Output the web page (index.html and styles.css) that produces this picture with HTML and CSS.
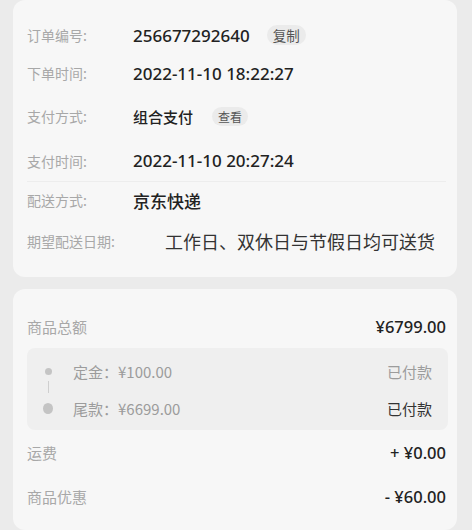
FILE: index.html
```html
<!DOCTYPE html>
<html lang="zh-CN">
<head>
<meta charset="utf-8">
<link rel="stylesheet" href="styles.css">
</head>
<body>
<div class="page">
  <section class="card info">
    <div class="row r1"><span class="label">订单编号:</span><span class="val num">256677292640</span><span class="tag tag-copy">复制</span></div>
    <div class="row r2"><span class="label">下单时间:</span><span class="val num">2022-11-10 18:22:27</span></div>
    <div class="row r3"><span class="label">支付方式:</span><span class="val cn">组合支付</span><span class="tag tag-view">查看</span></div>
    <div class="row r4 sep"><span class="label">支付时间:</span><span class="val num">2022-11-10 20:27:24</span></div>
    <div class="row r5"><span class="label">配送方式:</span><span class="val cn big">京东快递</span></div>
    <div class="row r6"><span class="label">期望配送日期:</span><span class="val plain">工作日、双休日与节假日均可送货</span></div>
  </section>
  <section class="card price">
    <div class="prow p1"><span class="plabel">商品总额</span><span class="amount">¥6799.00</span></div>
    <div class="stages">
      <div class="stage s1">
        <span class="dotcol"><span class="dot small"></span><span class="vline"></span></span>
        <span class="stext">定金：¥100.00</span>
        <span class="sstate">已付款</span>
      </div>
      <div class="stage s2">
        <span class="dotcol"><span class="dot large"></span></span>
        <span class="stext">尾款：¥6699.00</span>
        <span class="sstate dark">已付款</span>
      </div>
    </div>
    <div class="prow p2"><span class="plabel">运费</span><span class="amount">+ ¥0.00</span></div>
    <div class="prow p3"><span class="plabel">商品优惠</span><span class="amount">- ¥60.00</span></div>
  </section>
</div>
</body>
</html>
```
FILE: styles.css
```css
* { box-sizing: border-box; }
html, body {
  margin: 0;
  padding: 0;
  background: #ebebeb;
}
body {
  font-family: "Noto Sans", "Noto Sans CJK SC", sans-serif;
  color: #222;
  width: 472px;
  height: 530px;
  overflow: hidden;
}
.page {
  padding: 0 15px 0 13px;
  display: flex;
  flex-direction: column;
  gap: 12px;
}
.card {
  background: #f7f7f7;
  border-radius: 12px;
}
.info {
  padding: 16px 11px 13px 14px;
}
.row {
  display: flex;
  align-items: center;
}
.r1 { height: 38px; }
.r2 { height: 38px; }
.r3 { height: 48px; }
.r4 { height: 42px; }
.r5 { height: 36px; }
.r6 { height: 46px; }
.sep { border-bottom: 1px solid #ededed; }
.label {
  width: 106px;
  flex: none;
  font-family: "Noto Sans CJK SC", sans-serif;
  font-size: 14px;
  color: #a8a8a8;
}
.val {
  color: #222;
}
.num {
  font-family: "Noto Sans", "Noto Sans CJK SC", sans-serif;
  font-size: 17px;
  font-weight: 500;
}
.cn {
  font-family: "Noto Sans CJK SC", sans-serif;
  font-size: 15px;
  font-weight: 500;
}
.cn.big { font-size: 17px; }
.plain {
  font-family: "Noto Sans CJK SC", sans-serif;
  font-size: 18px;
  color: #333;
  margin-left: 32px;
}
.tag {
  font-family: "Noto Sans CJK SC", sans-serif;
  background: #ebebeb;
  color: #555;
  border-radius: 10px;
  display: flex;
  align-items: center;
  justify-content: center;
}
.tag-copy {
  margin-left: 17px;
  width: 39px;
  height: 20px;
  font-size: 13.5px;
}
.tag-view {
  margin-left: 19px;
  width: 36px;
  height: 19px;
  font-size: 12px;
}
.price {
  padding: 16px 9px 0 14px;
  height: 241px;
}
.prow {
  display: flex;
  align-items: center;
  justify-content: space-between;
  padding-right: 2px;
}
.p1 { height: 43px; }
.p2 { height: 44px; }
.p3 { height: 44px; }
.plabel {
  font-family: "Noto Sans CJK SC", sans-serif;
  font-size: 15px;
  color: #a8a8a8;
}
.amount {
  font-family: "Noto Sans", "Noto Sans CJK SC", sans-serif;
  font-size: 16.5px;
  font-weight: 500;
  color: #222;
}
.stages {
  background: #efefef;
  border-radius: 8px;
  padding: 5px 16px 3px 16px;
}
.stage {
  display: flex;
  align-items: center;
  height: 37px;
}
.dotcol {
  width: 10px;
  flex: none;
  position: relative;
  display: flex;
  justify-content: center;
  align-items: center;
  height: 37px;
}
.dot {
  border-radius: 50%;
  background: #c4c4c4;
  display: block;
}
.dot.small { width: 7px; height: 7px; }
.dot.large { width: 11px; height: 11px; }
.vline {
  position: absolute;
  left: 4.5px;
  top: 28px;
  width: 1px;
  height: 12px;
  background: #cfcfcf;
}
.stext {
  margin-left: 20px;
  flex: 1;
  font-family: "Noto Sans CJK SC", sans-serif;
  font-size: 15px;
  color: #9c9c9c;
}
.sstate {
  font-family: "Noto Sans CJK SC", sans-serif;
  font-size: 15px;
  color: #9c9c9c;
}
.sstate.dark { color: #333; }
```
